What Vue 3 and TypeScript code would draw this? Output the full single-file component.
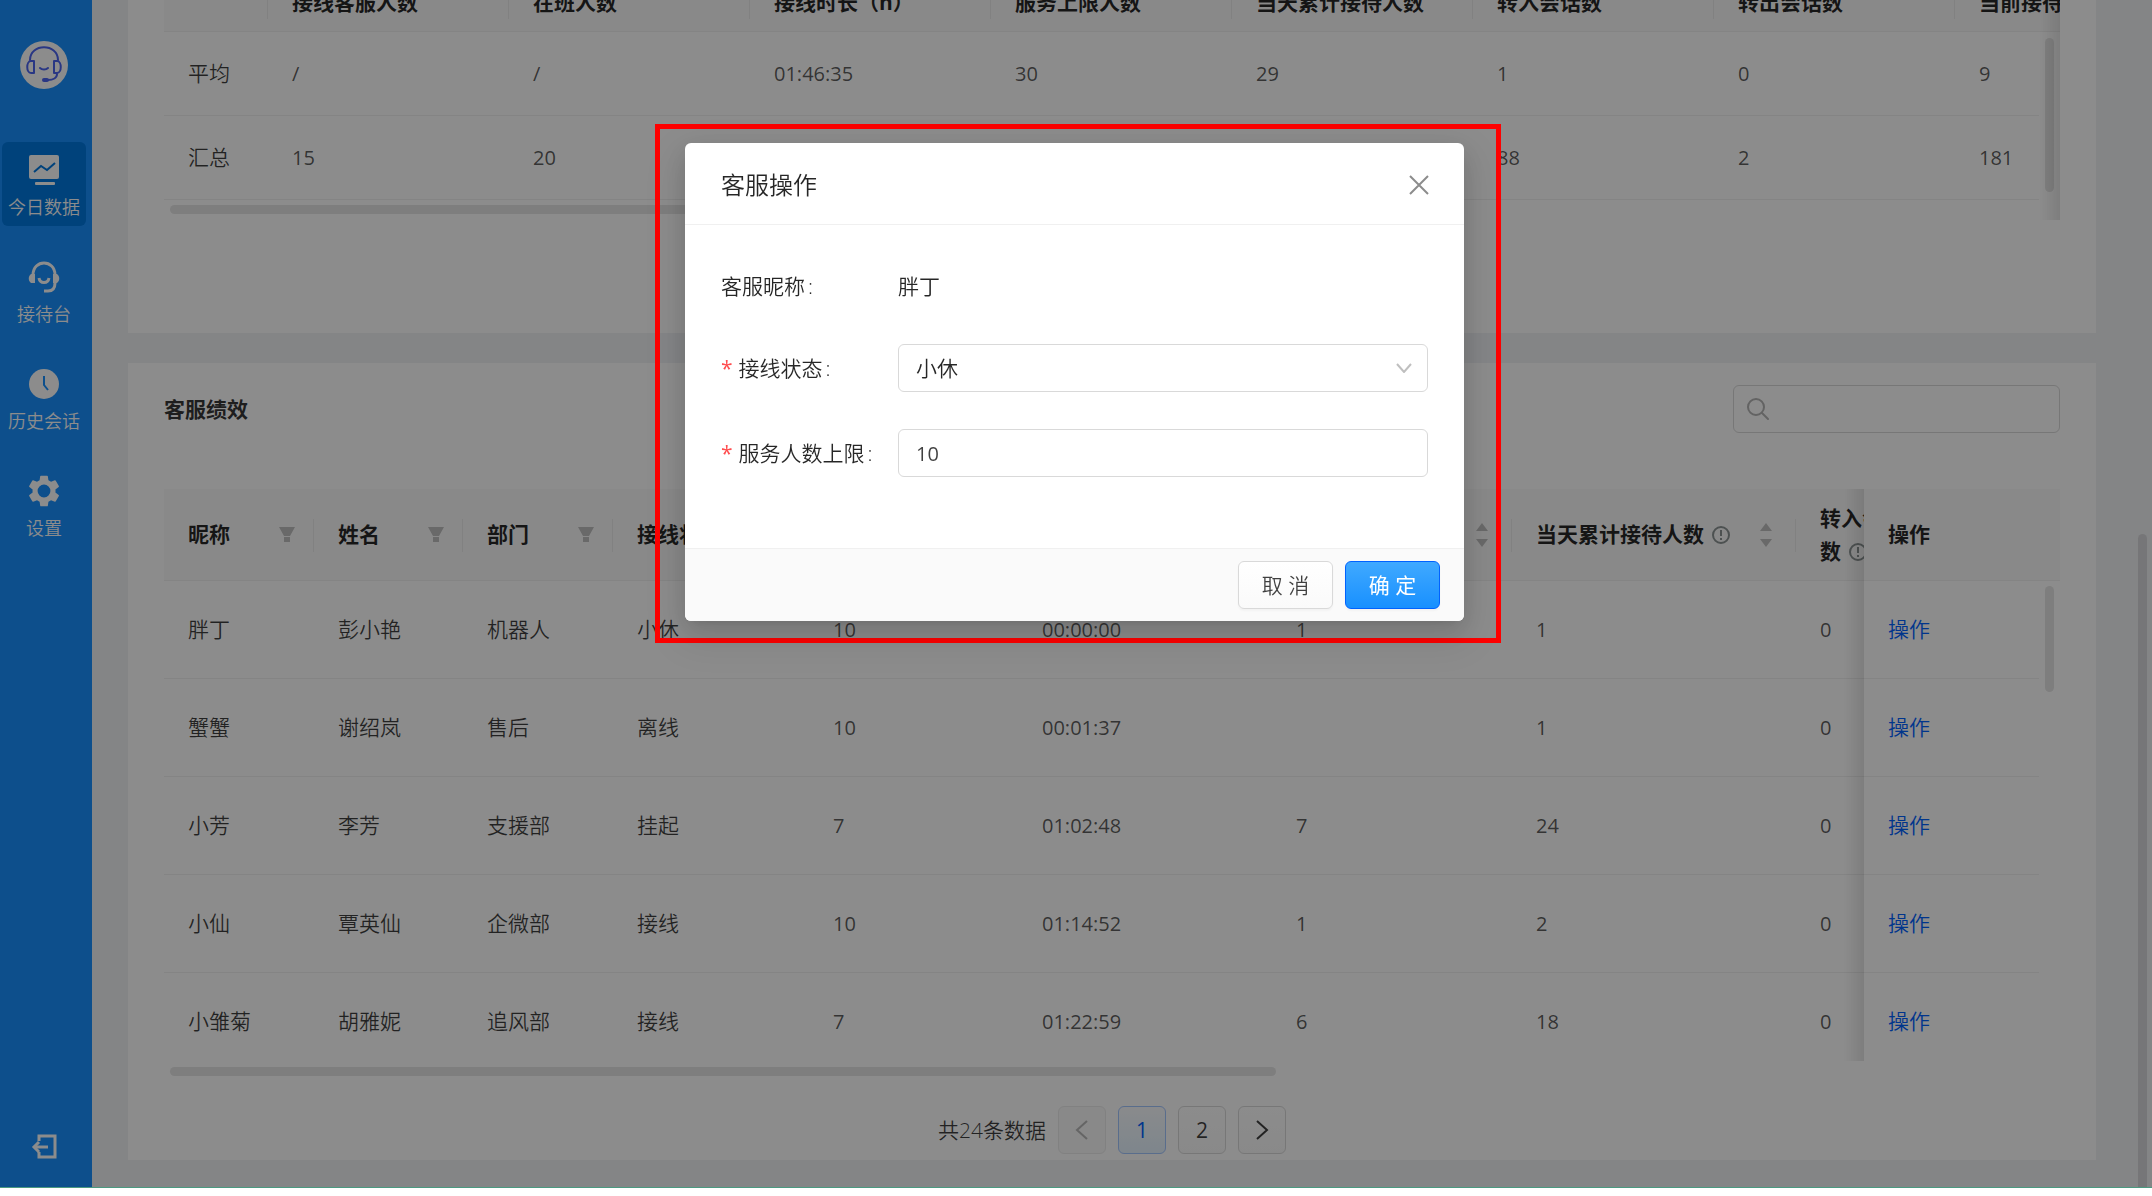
<script setup lang="ts">
import { ref } from 'vue'

interface NavItem { key: string; label: string }
interface Agent {
  nick: string; name: string; dept: string; state: string
  limit: string; time: string; current: string; total: string; moved: string
}

const navItems: NavItem[] = [
  { key: 'today', label: '今日数据' },
  { key: 'desk', label: '接待台' },
  { key: 'history', label: '历史会话' },
  { key: 'settings', label: '设置' },
]
const activeNav = ref('today')

const summaryHeads: string[] = [
  '', '接线客服人数', '在班人数', '接线时长（h）', '服务上限人数',
  '当天累计接待人数', '转入会话数', '转出会话数', '当前接待人数',
]
const summaryRows: string[][] = [
  ['平均', '/', '/', '01:46:35', '30', '29', '1', '0', '9'],
  ['汇总', '15', '20', '', '', '', '88', '2', '181'],
]

const filterHeads: string[] = ['昵称', '姓名', '部门', '接线状态']
const sortHeads: string[] = ['服务上限', '接线时长', '当前接待人数', '当天累计接待人数', '转入会话数']
const agents: Agent[] = [
  { nick: '胖丁', name: '彭小艳', dept: '机器人', state: '小休', limit: '10', time: '00:00:00', current: '1', total: '1', moved: '0' },
  { nick: '蟹蟹', name: '谢绍岚', dept: '售后', state: '离线', limit: '10', time: '00:01:37', current: '', total: '1', moved: '0' },
  { nick: '小芳', name: '李芳', dept: '支援部', state: '挂起', limit: '7', time: '01:02:48', current: '7', total: '24', moved: '0' },
  { nick: '小仙', name: '覃英仙', dept: '企微部', state: '接线', limit: '10', time: '01:14:52', current: '1', total: '2', moved: '0' },
  { nick: '小雏菊', name: '胡雅妮', dept: '追风部', state: '接线', limit: '7', time: '01:22:59', current: '6', total: '18', moved: '0' },
]

const status = ref('小休')
const limit = ref('10')
const keyword = ref('')
</script>

<template>
  <div class="app">
    <aside class="sider">
      <svg class="avatar" viewBox="0 0 48 48" fill="none">
        <circle cx="24" cy="24" r="24" fill="#fff" />
        <g stroke="#4c64f0" stroke-width="2" stroke-linecap="round" stroke-linejoin="round">
          <path d="M10 19C10 2 38 2 38 19" />
          <path d="M14 20h-3c-5 0-5 12 0 12h3z" />
          <path d="M34 20h3c5 0 5 12 0 12h-3z" />
          <path d="M20 27c2 2 6 2 8 0" />
          <path d="M37 33c0 4-4 6-9 6" />
          <path d="M24 39h3" stroke-width="4" />
        </g>
      </svg>
      <nav class="nav">
        <a
          v-for="item in navItems"
          :key="item.key"
          href="#"
          class="nav-item"
          :class="{ active: item.key === activeNav }"
          @click.prevent="activeNav = item.key"
        >
          <svg v-if="item.key === 'today'" class="nav-icon" viewBox="0 0 32 32">
            <rect x="1" y="1" width="30" height="24" rx="2" fill="#fff" />
            <path d="M6 18l7-6 6 4 8-7" fill="none" stroke="#0078e1" stroke-width="2" />
            <rect x="7" y="28" width="20" height="3" rx="1" fill="#fff" />
          </svg>
          <svg v-else-if="item.key === 'desk'" class="nav-icon" viewBox="0 0 32 32" fill="none">
            <path d="M5 14C5-2 27-2 27 14v8c0 6-3 8-7 8h-4" stroke="#fff" stroke-width="3" />
            <path d="M7 13H3c-3 2-3 7 0 9h4zM25 13h4c3 2 3 7 0 9h-4z" fill="#fff" />
            <path d="M11 17c1 6 9 6 10 0" stroke="#fff" stroke-width="3" />
          </svg>
          <svg v-else-if="item.key === 'history'" class="nav-icon" viewBox="0 0 32 32" fill="none">
            <circle cx="16" cy="16" r="15" fill="#fff" />
            <path d="M16 8v9l4 5" stroke="#1890ff" stroke-width="2" />
          </svg>
          <svg v-else class="nav-icon" viewBox="2 2 20 20">
            <path
              fill="#fff"
              d="M19.14 12.94c.04-.3.06-.61.06-.94s-.02-.64-.07-.94l2.03-1.58a.49.49 0 0 0 .12-.61l-1.92-3.32a.49.49 0 0 0-.59-.22l-2.39.96a7 7 0 0 0-1.62-.94l-.36-2.54a.48.48 0 0 0-.48-.41h-3.84a.48.48 0 0 0-.47.41l-.36 2.54c-.59.24-1.13.57-1.62.94l-2.39-.96a.48.48 0 0 0-.59.22L2.74 8.87a.48.48 0 0 0 .12.61l2.03 1.58a6 6 0 0 0 0 1.88l-2.03 1.58a.49.49 0 0 0-.12.61l1.92 3.32c.12.22.37.29.59.22l2.39-.96c.5.38 1.03.7 1.62.94l.36 2.54c.05.24.24.41.48.41h3.84c.24 0 .44-.17.47-.41l.36-2.54a7 7 0 0 0 1.62-.94l2.39.96c.22.08.47 0 .59-.22l1.92-3.32a.48.48 0 0 0-.12-.61zM12 16a4 4 0 1 1 0-8 4 4 0 0 1 0 8z"
            />
          </svg>
          <span>{{ item.label }}</span>
        </a>
      </nav>
      <button class="logout" type="button" aria-label="退出">
        <svg viewBox="0 0 26 26" fill="none" stroke="#fff" stroke-width="3">
          <path d="M8 7V2h16v21H8v-5" />
          <path d="M17 13H4" />
          <path d="M8 8l-5 5 5 5" />
        </svg>
      </button>
    </aside>

    <main class="main">
      <section class="card summary">
        <div class="table-wrap summary-wrap">
          <table>
            <colgroup>
              <col class="w104" />
              <col v-for="n in 8" :key="n" class="w241" />
              <col class="w21" />
            </colgroup>
            <thead>
              <tr>
                <th v-for="h in summaryHeads" :key="h" scope="col">{{ h }}</th>
                <th class="blank"></th>
              </tr>
            </thead>
            <tbody>
              <tr v-for="row in summaryRows" :key="row[0]">
                <td v-for="(cell, i) in row" :key="i" :class="{ num: i > 0 }">{{ cell }}</td>
                <td class="gutter"></td>
              </tr>
            </tbody>
          </table>
          <i class="hbar"></i>
          <i class="vbar"></i>
          <i class="edge"></i>
        </div>
      </section>

      <section class="card">
        <header class="card-head">
          <h2>客服绩效</h2>
          <label class="search">
            <svg viewBox="0 0 24 24" fill="none" stroke="#b4b4b4" stroke-width="2" stroke-linecap="round">
              <circle cx="10" cy="10" r="8" />
              <path d="M16 16l6 6" />
            </svg>
            <input v-model="keyword" type="text" aria-label="搜索" />
          </label>
        </header>
        <div class="table-wrap agents-wrap">
          <table>
            <colgroup>
              <col class="w150" /><col class="w149" /><col class="w150" /><col class="w196" />
              <col class="w209" /><col class="w254" /><col class="w240" /><col class="w284" />
              <col class="w150" /><col class="w241" /><col class="w241" /><col class="w175" /><col class="w21" />
            </colgroup>
            <thead>
              <tr>
                <th v-for="h in filterHeads" :key="h" scope="col">
                  <div class="th-in">
                    <span>{{ h }}</span>
                    <svg class="filter" viewBox="0 0 16 16" fill="#bfbfbf">
                      <path d="M0 0h16l-5 9H5zM5 10h6v5H5z" />
                    </svg>
                  </div>
                </th>
                <th v-for="h in sortHeads" :key="h" scope="col">
                  <div class="th-in">
                    <span>{{ h }}<svg class="info" viewBox="0 0 18 18" fill="none" stroke="#8c9494" stroke-width="2"><circle cx="9" cy="9" r="8" /><path d="M9 4v6M9 12v2" /></svg></span>
                    <svg class="sort" viewBox="0 0 12 26" fill="#bfbfbf">
                      <path d="M6 1l6 8H0zM6 25l6-8H0z" />
                    </svg>
                  </div>
                </th>
                <th></th>
                <th></th>
                <th class="fixed" scope="col">操作</th>
                <th class="gutter"></th>
              </tr>
            </thead>
            <tbody>
              <tr v-for="a in agents" :key="a.nick">
                <td>{{ a.nick }}</td>
                <td>{{ a.name }}</td>
                <td>{{ a.dept }}</td>
                <td>{{ a.state }}</td>
                <td class="num">{{ a.limit }}</td>
                <td class="num">{{ a.time }}</td>
                <td class="num">{{ a.current }}</td>
                <td class="num">{{ a.total }}</td>
                <td class="num">{{ a.moved }}</td>
                <td></td>
                <td></td>
                <td class="fixed"><a href="#" @click.prevent>操作</a></td>
                <td class="gutter"></td>
              </tr>
            </tbody>
          </table>
          <i class="vbar"></i>
        </div>
        <div class="hscroll"></div>
        <nav class="pager" aria-label="分页">
          <span>共24条数据</span>
          <button type="button" disabled aria-label="上一页">
            <svg viewBox="0 0 24 24"><path d="M17 3L7 12l10 9" /></svg>
          </button>
          <button type="button" class="on">1</button>
          <button type="button">2</button>
          <button type="button" aria-label="下一页">
            <svg viewBox="0 0 24 24"><path d="M7 3l10 9-10 9" /></svg>
          </button>
        </nav>
      </section>
      <i class="page-bar"></i>
    </main>

    <div class="mask">
      <div class="frame">
        <form class="modal" role="dialog" aria-labelledby="dialog-title" @submit.prevent>
          <header class="modal-head">
            <h1 id="dialog-title">客服操作</h1>
            <button type="button" class="close" aria-label="关闭">
              <svg viewBox="0 0 20 20"><path d="M1 1l18 18M19 1L1 19" /></svg>
            </button>
          </header>
          <div class="modal-body">
            <div class="row plain">
              <span class="label">客服昵称<i>:</i></span>
              <span>胖丁</span>
            </div>
            <div class="row">
              <label class="label" for="status"><b>*</b>接线状态<i>:</i></label>
              <div class="select">
                <select id="status" v-model="status">
                  <option>小休</option>
                  <option>接线</option>
                  <option>挂起</option>
                  <option>离线</option>
                </select>
                <svg viewBox="0 0 16 10"><path d="M1 1l7 8 7-8" /></svg>
              </div>
            </div>
            <div class="row">
              <label class="label" for="limit"><b>*</b>服务人数上限<i>:</i></label>
              <input id="limit" v-model="limit" class="num" type="text" />
            </div>
          </div>
          <footer class="modal-foot">
            <button type="button">取 消</button>
            <button type="submit" class="primary">确 定</button>
          </footer>
        </form>
      </div>
    </div>
  </div>
</template>

<style>
body {
  background: #fff;
}
</style>

<style scoped>
.app {
  position: relative;
  display: flex;
  height: calc(100vh - 8px);
  box-sizing: border-box;
  border-bottom: 1px solid #4a9a80;
  overflow: hidden;
  font: 350 21px/33px "Open Sans", "Noto Sans CJK SC", sans-serif;
  color: rgba(0, 0, 0, 0.75);
}
.app *,
.app *::before,
.app *::after {
  box-sizing: border-box;
}
button,
input,
select {
  font: inherit;
  color: inherit;
}
i,
b {
  font-style: normal;
  font-weight: inherit;
}

/* sidebar */
.sider {
  flex: none;
  width: 92px;
  padding: 41px 6px 27px 2px;
  background: #1890ff;
  display: flex;
  flex-direction: column;
  align-items: center;
}
.avatar {
  width: 48px;
  height: 48px;
}
.nav {
  display: flex;
  flex-direction: column;
  gap: 23px;
  margin-top: 53px;
}
.nav-item {
  width: 84px;
  height: 84px;
  padding-top: 12px;
  border-radius: 6px;
  display: flex;
  flex-direction: column;
  align-items: center;
  gap: 7px;
  font-size: 18px;
  line-height: 28px;
  color: #fff;
  text-decoration: none;
  white-space: nowrap;
}
.nav-item.active {
  background: #0078e1;
}
.nav-icon {
  width: 32px;
  height: 32px;
}
.logout {
  margin-top: auto;
  padding: 0;
  border: 0;
  background: none;
  width: 26px;
  height: 26px;
}
.logout svg {
  display: block;
}

/* page body */
.main {
  position: relative;
  flex: 1;
  min-width: 0;
  background: #f0f2f5;
  padding: 0 56px 0 36px;
}
.card {
  background: #fff;
  padding: 0 36px;
}
.summary {
  height: 333px;
  margin-bottom: 30px;
}
.table-wrap {
  position: relative;
  overflow: hidden;
}
table {
  table-layout: fixed;
  width: 0;
  border-collapse: separate;
  border-spacing: 0;
}
th,
td {
  padding: 0 24px;
  text-align: left;
  border-bottom: 1px solid #f0f0f0;
  background: #fff;
}
th {
  position: relative;
  background: #fafafa;
  font-weight: 700;
  color: rgba(0, 0, 0, 0.85);
}
th:not(.fixed, .gutter, .blank)::after {
  content: "";
  position: absolute;
  right: 0;
  top: calc(50% - 16px);
  width: 1px;
  height: 33px;
  background: #ececec;
}
td {
  color: rgba(0, 0, 0, 0.75);
}
.num {
  font-size: 20px;
  font-weight: 400;
}
td.num {
  color: rgba(0, 0, 0, 0.65);
}
.w21 { width: 21px; }
.w104 { width: 104px; }
.w149 { width: 149px; }
.w150 { width: 150px; }
.w175 { width: 175px; }
.w196 { width: 196px; }
.w209 { width: 209px; }
.w240 { width: 240px; }
.w241 { width: 241px; }
.w254 { width: 254px; }
.w284 { width: 284px; }

.summary-wrap {
  height: 220px;
}
.summary-wrap table {
  margin-top: -27px;
}
.summary-wrap th {
  height: 59px;
  white-space: nowrap;
}
.summary-wrap td {
  height: 84px;
}
.gutter {
  position: sticky;
  right: 0;
  padding: 0;
}
td.gutter {
  border-bottom-color: #fff;
}
.hbar,
.vbar,
.hscroll,
.page-bar {
  border-radius: 5px;
  background: #e6e6e6;
}
.hbar {
  position: absolute;
  left: 6px;
  top: 205px;
  width: 64%;
  height: 9px;
}
.vbar {
  position: absolute;
  right: 6px;
  top: 38px;
  width: 9px;
  height: 154px;
}
.edge {
  position: absolute;
  right: 0;
  top: 0;
  bottom: 0;
  width: 20px;
  background: linear-gradient(to right, transparent, rgba(0, 0, 0, 0.1));
}

.card-head {
  display: flex;
  justify-content: space-between;
  align-items: center;
  height: 92px;
}
h2 {
  margin: 0;
  font-size: 21px;
  font-weight: 700;
  color: rgba(0, 0, 0, 0.8);
}
.search {
  display: flex;
  align-items: center;
  width: 327px;
  height: 48px;
  padding: 0 12px;
  border: 1px solid #d9d9d9;
  border-radius: 6px;
}
.search svg {
  width: 24px;
  height: 24px;
}
.search input {
  flex: 1;
  min-width: 0;
  border: 0;
  outline: 0;
  background: none;
}
.agents-wrap {
  height: 572px;
  margin-top: 34px;
}
.agents-wrap th {
  height: 92px;
}
.agents-wrap td {
  height: 98px;
}
.agents-wrap .vbar {
  top: 97px;
  height: 106px;
}
.th-in {
  display: flex;
  align-items: center;
  justify-content: space-between;
}
.filter {
  width: 16px;
  height: 16px;
  margin-right: -5px;
}
.sort {
  width: 12px;
  height: 26px;
  flex: none;
}
.info {
  width: 18px;
  height: 18px;
  margin-left: 8px;
  vertical-align: -2px;
}
.fixed {
  position: sticky;
  right: 21px;
}
.fixed::before {
  content: "";
  position: absolute;
  right: 100%;
  top: 0;
  bottom: -1px;
  width: 20px;
  background: linear-gradient(to right, transparent, rgba(0, 0, 0, 0.1));
}
td a {
  color: #0062ff;
  text-decoration: none;
}
.hscroll {
  width: 1106px;
  height: 9px;
  margin: 6px 0 0 6px;
}
.pager {
  display: flex;
  justify-content: center;
  align-items: center;
  gap: 12px;
  margin-top: 30px;
  padding-bottom: 6px;
}
.pager button {
  width: 48px;
  height: 48px;
  padding: 0;
  border: 1px solid #d9d9d9;
  border-radius: 6px;
  background: linear-gradient(#fff, #fafafa);
  font-weight: 400;
  display: grid;
  place-items: center;
}
.pager button.on {
  background: linear-gradient(#fafcff, #e6f4ff);
  border-color: #a3c6ff;
  color: #0062ff;
}
.pager button:disabled {
  background: #f9f9f9;
  border-color: #ececec;
  color: #b8b8b8;
}
.pager svg {
  width: 24px;
  height: 24px;
  fill: none;
  stroke: currentColor;
  stroke-width: 2;
}
.page-bar {
  position: absolute;
  right: 5px;
  top: 534px;
  bottom: 0;
  width: 9px;
  border-radius: 5px 5px 0 0;
  background: #d8d8da;
}

/* dialog */
.mask {
  position: absolute;
  inset: 0;
  z-index: 5;
  background: rgba(0, 0, 0, 0.45);
  display: flex;
  justify-content: center;
  align-items: flex-start;
  padding: 124px 0 0 4px;
}
.frame {
  padding: 14px 32px 17px 25px;
  border: 5px solid #f00;
}
.modal {
  width: 779px;
  border-radius: 6px;
  background: #fff;
  box-shadow: 0 5px 9px -6px rgba(0, 0, 0, 0.12), 0 9px 24px rgba(0, 0, 0, 0.12),
    0 14px 42px 12px rgba(0, 0, 0, 0.08);
}
.modal-head {
  display: flex;
  justify-content: space-between;
  align-items: center;
  height: 82px;
  padding: 2px 35px 0 36px;
  border-bottom: 1px solid #f0f0f0;
}
h1 {
  margin: 0;
  font-size: 24px;
  font-weight: 350;
  color: rgba(0, 0, 0, 0.85);
}
.close {
  width: 20px;
  height: 20px;
  padding: 0;
  border: 0;
  background: none;
}
.close svg {
  display: block;
  stroke: #8c8c8c;
  stroke-width: 2;
}
.modal-body {
  display: flex;
  flex-direction: column;
  gap: 37px;
  padding: 40px 36px 71px;
  color: rgba(0, 0, 0, 0.85);
}
.row {
  display: flex;
  align-items: center;
  height: 48px;
}
.plain {
  height: 42px;
}
.label {
  width: 177px;
  flex: none;
  white-space: nowrap;
}
.label i {
  margin-left: 3px;
}
.label b {
  margin-right: 6px;
  color: #ff4d4f;
  font-weight: 400;
}
.select {
  position: relative;
  flex: 1;
}
.select svg {
  position: absolute;
  right: 16px;
  top: 19px;
  width: 16px;
  height: 10px;
  fill: none;
  stroke: #bfbfbf;
  stroke-width: 2;
  pointer-events: none;
}
.row select,
.row input {
  display: block;
  width: 100%;
  height: 48px;
  padding: 0 17px;
  border: 1px solid #d9d9d9;
  border-radius: 6px;
  background: #fff;
  appearance: none;
  outline: 0;
}
.row .num {
  color: rgba(0, 0, 0, 0.75);
}
.modal-foot {
  display: flex;
  justify-content: flex-end;
  gap: 12px;
  padding: 12px 24px;
  border-top: 1px solid #f0f0f0;
  border-radius: 0 0 6px 6px;
  background: #fafafa;
}
.modal-foot button {
  width: 95px;
  height: 48px;
  padding: 0;
  border: 1px solid #d9d9d9;
  border-radius: 6px;
  background: linear-gradient(#fff, #fafafa);
  box-shadow: 0 2px 2px rgba(0, 0, 0, 0.03);
}
.modal-foot .primary {
  border-color: #0062ff;
  background: linear-gradient(#40a9ff, #1890ff);
  color: #fff;
  font-weight: 400;
}
</style>
